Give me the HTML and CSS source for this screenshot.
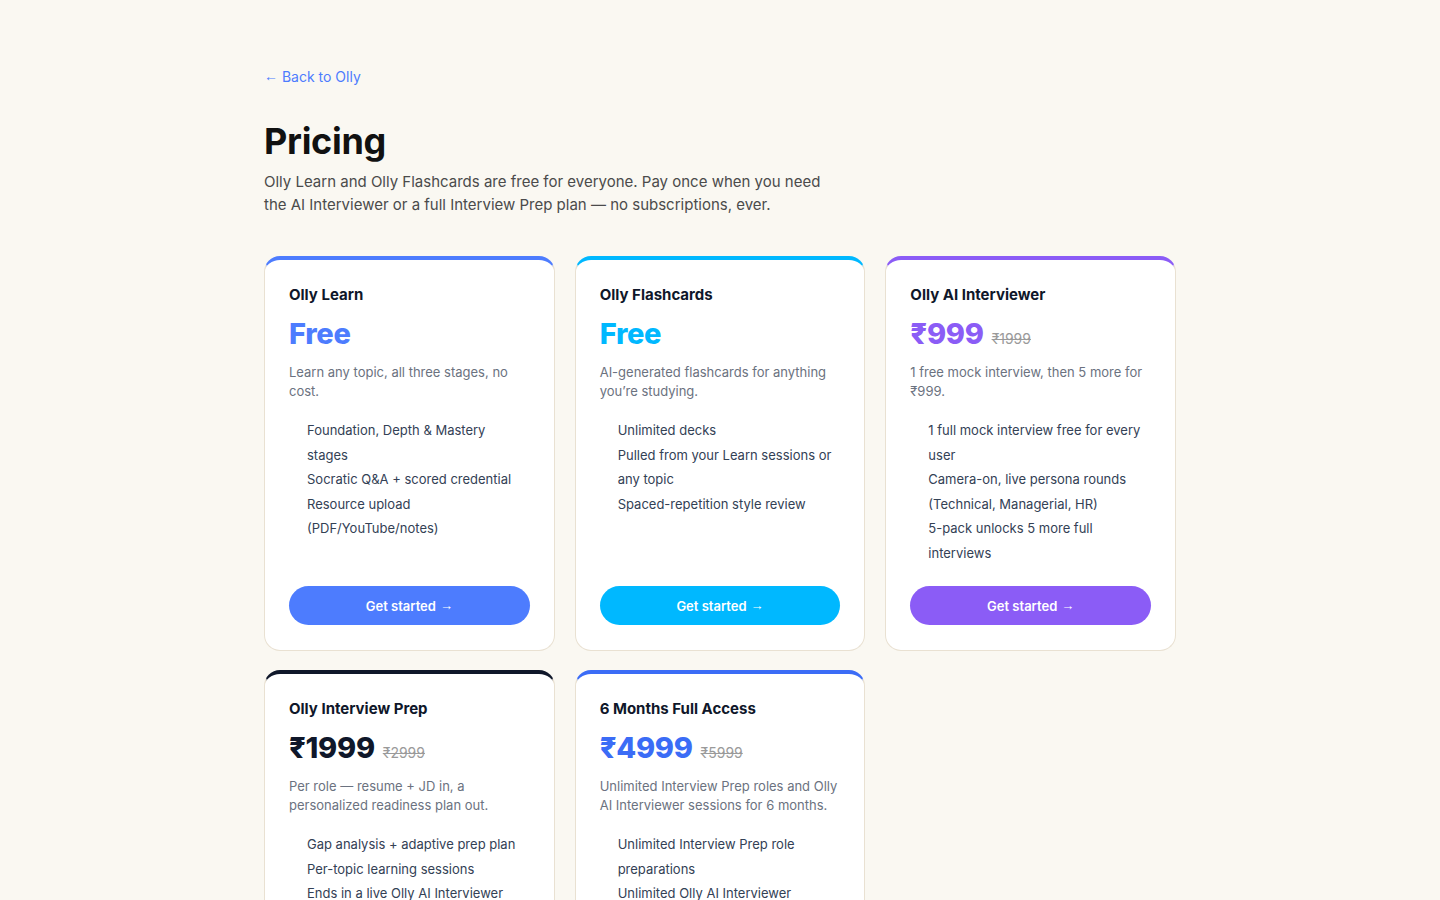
FILE: index.html
```html
<!DOCTYPE html>
<html lang="en">
<head>
<meta charset="utf-8">
<title>Pricing</title>
<link rel="stylesheet" href="styles.css">
</head>
<body>
<main class="page">
  <a class="back" href="#"><span class="arrow">←</span> Back to Olly</a>
  <h1 class="title">Pricing</h1>
  <p class="lead">Olly Learn and Olly Flashcards are free for everyone. Pay once when you need the AI Interviewer or a full Interview Prep plan — no subscriptions, ever.</p>

  <div class="grid">
    <section class="card card-learn">
      <h2 class="card-name">Olly Learn</h2>
      <div class="price-row"><span class="price">Free</span></div>
      <p class="desc">Learn any topic, all three stages, no cost.</p>
      <ul class="features">
        <li>Foundation, Depth &amp; Mastery stages</li>
        <li>Socratic Q&amp;A + scored credential</li>
        <li>Resource upload (PDF/YouTube/notes)</li>
      </ul>
      <a class="btn" href="#">Get started <span class="arrow">→</span></a>
    </section>

    <section class="card card-flash">
      <h2 class="card-name">Olly Flashcards</h2>
      <div class="price-row"><span class="price">Free</span></div>
      <p class="desc">AI-generated flashcards for anything you’re studying.</p>
      <ul class="features">
        <li>Unlimited decks</li>
        <li>Pulled from your Learn sessions or any topic</li>
        <li>Spaced-repetition style review</li>
      </ul>
      <a class="btn" href="#">Get started <span class="arrow">→</span></a>
    </section>

    <section class="card card-ai">
      <h2 class="card-name">Olly AI Interviewer</h2>
      <div class="price-row"><span class="price">₹999</span><span class="old">₹1999</span></div>
      <p class="desc">1 free mock interview, then 5 more for ₹999.</p>
      <ul class="features">
        <li>1 full mock interview free for every user</li>
        <li>Camera-on, live persona rounds (Technical, Managerial, HR)</li>
        <li>5-pack unlocks 5 more full interviews</li>
      </ul>
      <a class="btn" href="#">Get started <span class="arrow">→</span></a>
    </section>

    <section class="card card-prep">
      <h2 class="card-name">Olly Interview Prep</h2>
      <div class="price-row"><span class="price">₹1999</span><span class="old">₹2999</span></div>
      <p class="desc">Per role — resume + JD in, a personalized readiness plan out.</p>
      <ul class="features">
        <li>Gap analysis + adaptive prep plan</li>
        <li>Per-topic learning sessions</li>
        <li>Ends in a live Olly AI Interviewer round</li>
      </ul>
      <a class="btn" href="#">Get started <span class="arrow">→</span></a>
    </section>

    <section class="card card-full">
      <h2 class="card-name">6 Months Full Access</h2>
      <div class="price-row"><span class="price">₹4999</span><span class="old">₹5999</span></div>
      <p class="desc">Unlimited Interview Prep roles and Olly AI Interviewer sessions for 6 months.</p>
      <ul class="features">
        <li>Unlimited Interview Prep role preparations</li>
        <li>Unlimited Olly AI Interviewer sessions</li>
        <li>Valid for 6 months</li>
      </ul>
      <a class="btn" href="#">Get started <span class="arrow">→</span></a>
    </section>
  </div>
</main>
</body>
</html>
```

FILE: styles.css
```css
* { box-sizing: border-box; }

html, body {
  margin: 0;
  padding: 0;
  background: #faf8f2;
  font-family: Inter, "Noto Sans", "Liberation Sans", sans-serif;
  color: #111;
}

.page {
  width: 912px;
  margin: 0 0 0 264px;
  padding: 66px 0 60px;
}

.arrow {
  font-family: "Liberation Sans", Arial, sans-serif;
  font-weight: 400;
  vertical-align: 1px;
}

.back {
  display: inline-block;
  font-size: 14px;
  line-height: 20px;
  color: #4d7cfe;
  text-decoration: none;
}

.title {
  margin: 32px 0 0;
  font-size: 36px;
  line-height: 44px;
  font-weight: 700;
  color: #111111;
  letter-spacing: -0.3px;
}

.lead {
  margin: 7px 0 0;
  max-width: 570px;
  font-size: 15px;
  line-height: 23px;
  color: #4b4b4b;
}

.grid {
  margin-top: 40px;
  display: grid;
  grid-template-columns: repeat(3, 1fr);
  column-gap: 20px;
  row-gap: 19px;
}

.card {
  display: flex;
  flex-direction: column;
  background: #ffffff;
  border: 1px solid #e9e1d2;
  border-top: 4px solid #4d7cfe;
  border-radius: 16px;
  padding: 25px 24px 25px;
}

.card-learn { border-top-color: #4d7cfe; }
.card-flash { border-top-color: #00b8ff; }
.card-ai { border-top-color: #8b5cf6; }
.card-prep { border-top-color: #0f172a; }
.card-full { border-top-color: #3b6cf6; }

.card-name {
  margin: 0;
  font-size: 15px;
  line-height: 20px;
  font-weight: 700;
  color: #0f172a;
}

.price-row {
  margin-top: 11px;
  display: flex;
  align-items: baseline;
  gap: 8px;
  height: 36px;
  line-height: 36px;
  overflow: visible;
}

.price {
  font-size: 29px;
  font-weight: 800;
  letter-spacing: -0.3px;
}

.card-learn .price { color: #4d7cfe; }
.card-flash .price { color: #00b8ff; }
.card-ai .price { color: #8b5cf6; }
.card-prep .price { color: #0f172a; }
.card-full .price { color: #3b6cf6; }

.old {
  font-size: 14px;
  color: #9a9a9a;
  text-decoration: line-through;
}

.desc {
  margin: 11px 0 0;
  font-size: 13px;
  line-height: 19px;
  color: #6b7280;
}

.features {
  list-style: none;
  margin: 17px 0 21px;
  padding: 0 0 0 18px;
  font-size: 13px;
  line-height: 24.5px;
  color: #334155;
}

.btn {
  margin-top: auto;
  display: flex;
  align-items: center;
  justify-content: center;
  gap: 4px;
  height: 39px;
  border-radius: 999px;
  color: #ffffff;
  font-size: 13px;
  font-weight: 600;
  text-decoration: none;
}

.card-learn .btn { background: #4d7cfe; }
.card-flash .btn { background: #00b8ff; }
.card-ai .btn { background: #8b5cf6; }
.card-prep .btn { background: #0f172a; }
.card-full .btn { background: #3b6cf6; }
```
